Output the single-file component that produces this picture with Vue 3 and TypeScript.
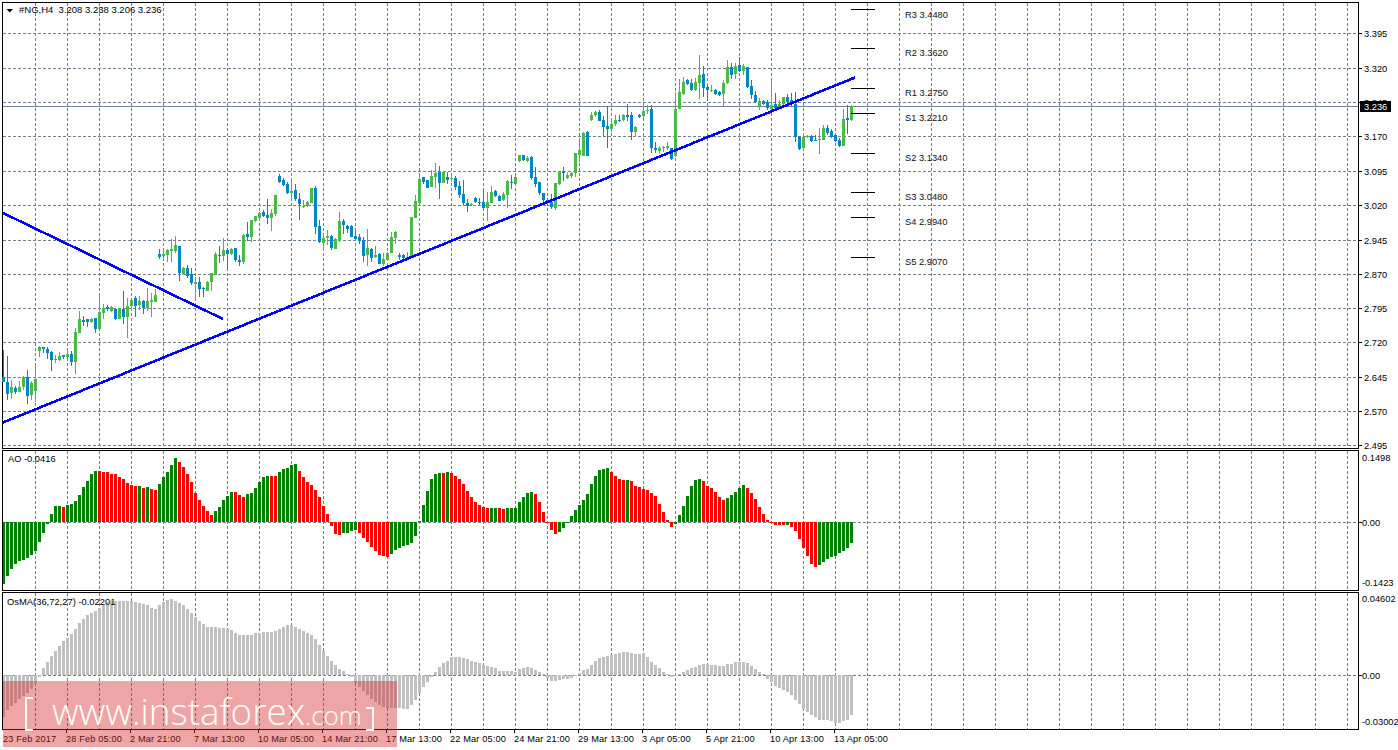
<script setup lang="ts">
type Candle = [string, number, number, number, number]

const BLUE = '#0685c5'
const GREEN = '#4cb848'

// wick top, body top, body bottom, wick bottom; measured as 3x values from a pane offset
const partA: Candle[] = [
  ['b',570,651,666,666],['b',588,665,702,720],['g',660,681,699,717],['b',678,684,696,702],['g',663,681,696,696],
  ['g',648,651,681,690],['b',630,651,708,732],['g',663,669,705,720],['g',618,657,693,726],['g',558,561,573,591],
  ['b',561,561,567,579],['b',561,567,579,597],['b',573,576,600,633],['g',585,597,600,609],['g',576,588,600,603],
  ['b',585,585,591,597],['g',570,582,591,594],['b',573,582,606,618],['g',504,516,606,642],['g',453,477,519,519],
  ['b',468,480,486,498],['b',477,477,486,501],['g',474,477,486,489],['b',474,474,507,519],['g',405,456,507,507],
  ['g',432,444,459,477],['b',435,441,447,453],['g',438,441,453,456],['b',444,447,477,480],['g',444,444,477,477],
  ['b',393,447,471,492],['g',414,438,471,534],['g',414,420,438,450],['b',408,414,438,471],['g',408,423,435,450],
  ['b',420,423,444,462],['g',384,423,444,453],['g',399,420,426,471],['g',387,405,426,426],['b',267,282,291,297],
  ['g',270,282,288,297],['g',267,270,285,306],['g',237,267,273,306],['g',228,255,273,279],['b',258,258,339,363],
  ['g',321,324,342,345],['b',315,324,348,354],['b',324,342,369,375],['g',351,366,372,420],['b',351,366,387,411],
  ['b',381,384,387,411],['g',363,366,393,393],['g',339,339,366,393],['g',276,282,345,345],['b',258,285,288,309],
  ['g',234,270,288,303],['b',264,270,282,327],['g',264,267,282,285],['b',264,264,300,306],['b',285,300,306,318],
  ['g',222,225,306,312],['b',186,222,231,243],['g',180,180,231,246],['g',168,168,183,186],['g',156,159,174,177],
  ['b',150,156,168,171],['b',117,165,174,192],['g',147,159,174,213],['g',105,105,162,168],['b',42,48,66,69],
  ['b',54,60,75,78],['b',66,72,99,102],['g',54,93,99,117],['b',72,90,117,123],['b',99,117,132,180],
  ['g',120,138,141,144],['g',123,126,138,141],['g',84,84,129,129],['b',78,84,201,222],['b',180,198,246,249],
  ['g',222,234,249,273],['g',210,228,234,255],['b',225,228,264,270],['g',234,237,267,267],['g',156,183,243,246],
  ['b',177,183,195,222],['b',195,198,207,219],['b',195,198,231,231],['b',210,228,237,240],['b',222,231,243,252],
  ['b',231,240,288,306],['g',207,264,285,318],['b',264,267,294,306],['g',258,285,291,294],['b',279,282,312,312],
  ['g',279,297,312,318],['g',276,279,300,303],['g',216,231,279,279],['g',213,216,234,252],['b',279,285,291,300],
  ['b',282,285,294,297],['g',276,291,294,297],['g',171,171,291,294],['g',105,123,174,174],['g',48,57,129,129],
  ['b',51,51,66,72],['b',60,60,84,84],
]

const partB: Candle[] = [
  ['g',360,378,411,411],['g',339,369,381,414],['b',348,366,399,447],['g',363,366,399,399],['b',366,381,390,402],
  ['g',378,384,387,396],['b',378,384,411,420],['b',393,408,435,444],['b',390,432,459,465],['b',447,459,468,486],
  ['g',459,462,465,468],['b',441,444,456,459],['b',444,456,459,468],['b',420,456,474,480],['g',426,456,474,513],
  ['g',408,426,459,459],['b',420,423,438,441],['b',435,438,453,453],['g',426,432,450,453],['g',390,393,435,474],
  ['b',375,396,399,417],['g',375,381,402,405],['g',315,315,333,336],['b',315,315,330,333],['g',318,324,333,336],
  ['b',318,321,384,390],['b',351,381,402,411],['b',396,396,429,435],['b',429,429,450,459],['b',450,450,456,468],
  ['b',432,456,471,477],['g',399,399,474,480],['g',363,366,402,405],['b',351,363,369,393],['g',366,375,384,387],
  ['g',366,369,378,384],['g',309,309,369,381],['g',270,300,315,336],['g',246,249,318,318],['b',243,246,318,318],
  ['g',186,195,210,213],['g',183,186,195,201],['b',180,186,213,213],['b',198,210,231,261],['b',168,228,237,294],
  ['g',213,222,237,246],['g',195,210,222,228],['b',195,210,213,216],['g',192,195,210,213],['b',162,195,201,213],
  ['b',186,195,246,270],['g',228,231,246,258],['b',192,195,201,204],['g',168,183,198,204],['g',165,180,183,192],
  ['b',165,177,294,309],['b',276,294,300,309],['g',288,294,303,312],['g',288,291,294,306],['g',276,288,294,300],
  ['b',294,294,327,330],['g',126,177,318,321],['g',87,126,177,177],['g',81,96,132,135],['b',87,90,102,105],
  ['b',87,99,120,123],['g',84,96,120,123],['g',15,75,99,147],['b',48,72,114,141],['b',108,111,120,153],
  ['g',105,120,123,126],['b',117,120,132,135],['b',123,126,135,138],['g',90,99,132,168],['g',30,51,99,102],
  ['b',39,51,75,87],['g',39,48,72,87],['b',21,45,63,66],['g',42,48,63,75],['b',51,51,111,114],
  ['b',90,108,135,147],['b',123,135,156,159],['g',144,153,168,180],['b',150,153,162,165],['b',150,156,174,180],
  ['g',90,165,177,180],['b',129,162,174,180],['g',150,162,171,174],['g',141,141,162,165],['b',132,141,156,162],
  ['b',129,150,159,171],['b',126,162,261,276],['b',258,261,297,300],['g',252,261,294,300],['g',255,258,261,264],
  ['b',255,258,273,276],['b',255,270,273,273],['g',234,267,270,312],['g',225,234,270,270],['b',225,234,249,255],
  ['b',237,243,261,264],['b',252,255,273,276],['b',264,270,288,291],['g',177,207,288,288],['b',165,204,210,252],
  ['g',165,168,210,213],
]

function toCandles(rows: Candle[], base: number, first: number) {
  return rows.map((r, n) => {
    const x = 3 + 4 * (first + n)
    const [wt, bt, bb, wb] = r.slice(1).map((v) => base + Math.round(Number(v) / 3)) as number[]
    return {
      wick: { x, y: wt, h: Math.max(wb - wt, 1) },
      body: { x: x - 1, y: bt, h: Math.max(bb - bt, 1) },
      fill: r[0] === 'g' ? GREEN : BLUE,
    }
  })
}
const candles = [...toCandles(partA, 160, 0), ...toCandles(partB, 50, partA.length)]

const aoHead = [-62,-54,-47,-42,-39,-38,-36,-33,-29,-20,-11,-2,8,16,16,15,17,18,21,27,35,41,48,51,51,50,50,48,48,45,43,39,37,36,36,34,35,33,32,38,45,50,57,64,60,55,48,40,29,22,16,11,7,11,15,22,26,30,30,27,25,28,29,34,40,45,46,46,46,50,53,54]
const aoTail = [30,27,48,66,81,90,105,126,153,177,213,237,240,234,234,228,225,234,249,261,276,288,300,303,306,297,285,279,273,270,264,243,198,150,108,72,57,54,54,51,54,63,72,87,108,126,141,150,156,159,159,159,159,162,159,159,159,141,126,114,111,117,141,171,204,225,237,231,219,204,183,165,150,135,117,87,63,45,42,39,51,63,72,75,75,78,93,96,102,105,114,123,147,171,195,216,207,180,153,123,93,75,72,78,93,99,111,126,135,129,120,111,99,90,99,114,132,156,177,195,204,210,210,210,210,216,228,252,279,303,327,336,330,321,312,306,303,294,288,279,264]
const aoValues = [...aoHead, ...aoTail.map((z) => Math.round((202 - z) / 3))]
const aoRuns = [15,1,8,10,1,1,1,2,5,9,5,3,6,2,5,11,4,8,13,1,1,10,2,2,7,6,13,4,1,11,7,6,5,10,1,7,9]
const aoColors: string[] = []
aoRuns.forEach((count, n) => {
  for (let k = 0; k < count; k++) aoColors.push(n % 2 === 0 ? '#008000' : '#ff0000')
})

const osmaValues = [-42,-35,-31,-28,-24,-21,-18,-14,-9,-2,7,13,19,24,29,34,37,41,46,52,56,60,62,64,67,71,73,74,74,74,74,74,74,73,72,71,70,67,66,70,73,75,76,74,72,70,66,62,58,54,51,48,48,48,47,47,46,45,42,40,40,40,40,42,42,43,43,43,44,46,48,50,50,48,46,44,42,40,36,30,24,19,14,10,6,4,1,-2,-8,-12,-16,-20,-24,-27,-30,-32,-33,-33,-33,-33,-34,-34,-30,-25,-18,-12,-7,-2,3,8,12,14,18,18,18,17,16,14,13,12,10,9,8,7,4,4,4,4,3,6,7,8,7,5,3,1,-3,-6,-6,-5,-4,-4,-3,-1,2,5,6,10,14,17,18,19,20,21,22,23,23,22,21,21,22,18,13,10,7,3,1,-2,0,1,3,5,7,8,10,11,11,10,10,9,9,11,11,13,13,13,12,9,6,3,1,-4,-7,-11,-13,-15,-17,-20,-25,-29,-34,-37,-40,-42,-45,-45,-45,-46,-48,-48,-46,-45,-40]

function bars(values: number[], zero: number) {
  return values.map((v, n) => ({
    x: 2 + 4 * n,
    y: v > 0 ? zero - v : zero,
    h: Math.max(Math.abs(v), 1),
  }))
}
const aoBars = bars(aoValues, 522)
const osmaBars = bars(osmaValues, 675)

const verticals = Array.from({ length: 42 }, (_, n) => 35 + 32 * n)

const priceRows: [number, string][] = [
  [33,'3.395'],[68,'3.320'],[102,'3.245'],[136,'3.170'],[171,'3.095'],[205,'3.020'],[240,'2.945'],
  [274,'2.870'],[308,'2.795'],[342,'2.720'],[377,'2.645'],[411,'2.570'],[445,'2.495'],
]

const pivots: { line: number; label: string; text: number }[] = [
  { line: 9, label: 'R3 3.4480', text: 15 },
  { line: 48, label: 'R2 3.3620', text: 53 },
  { line: 88, label: 'R1 3.2750', text: 93 },
  { line: 113, label: 'S1 3.2210', text: 118 },
  { line: 153, label: 'S2 3.1340', text: 158 },
  { line: 192, label: 'S3 3.0480', text: 197 },
  { line: 217, label: 'S4 2.9940', text: 222 },
  { line: 257, label: 'S5 2.9070', text: 262 },
]

const times = ['23 Feb 2017','28 Feb 05:00','2 Mar 21:00','7 Mar 13:00','10 Mar 05:00','14 Mar 21:00','17 Mar 13:00','22 Mar 05:00','24 Mar 21:00','29 Mar 13:00','3 Apr 05:00','5 Apr 21:00','10 Apr 13:00','13 Apr 05:00']
</script>

<template>
  <div class="terminal">
    <div class="pane pane-main">
      <svg class="chart" width="1398" height="449" viewBox="0 0 1398 449">
        <g class="grid">
          <line v-for="x in verticals" :key="x" :x1="x + 0.5" :x2="x + 0.5" y1="3" y2="448" />
          <line v-for="row in priceRows" :key="row[1]" x1="3" x2="1358" :y1="row[0] + 0.5" :y2="row[0] + 0.5" />
        </g>
        <rect class="frame" x="2.5" y="2.5" width="1356" height="446" />
        <rect x="3" y="106" width="1355" height="1" fill="#708090" />
        <g class="pixel">
          <template v-for="(c, n) in candles" :key="n">
            <rect :x="c.wick.x" :y="c.wick.y" width="1" :height="c.wick.h" :fill="c.fill" />
            <rect :x="c.body.x" :y="c.body.y" width="3" :height="c.body.h" :fill="c.fill" />
          </template>
        </g>
        <g class="pixel">
          <rect v-for="p in pivots" :key="p.line" x="851" :y="p.line" width="24" height="1" fill="#000" />
        </g>
        <g class="trend">
          <line x1="3" y1="422.5" x2="855" y2="77.5" />
          <line x1="3" y1="213" x2="223" y2="319" />
        </g>
        <polygon points="6.5,9 13,9 9.75,12.5" fill="#000" />
        <text class="t title" x="19" y="13">#NG,H4&#160;&#160;3.208 3.238 3.206 3.236</text>
        <text v-for="p in pivots" :key="p.label" class="t pivot" x="905" :y="p.text + 3">{{ p.label }}</text>
        <g class="pixel">
          <rect v-for="row in priceRows" :key="row[1]" x="1359" :y="row[0]" width="3" height="1" fill="#000" />
        </g>
        <text v-for="row in priceRows" :key="row[1]" class="t" x="1364" :y="row[0] + 3.5">{{ row[1] }}</text>
        <rect x="1360" y="101" width="31" height="11" fill="#000" />
        <text class="t bid" x="1364" y="110">3.236</text>
      </svg>
    </div>

    <div class="pane pane-ao">
      <svg class="chart" width="1398" height="141" viewBox="0 450 1398 141">
        <g class="grid">
          <line v-for="x in verticals" :key="x" :x1="x + 0.5" :x2="x + 0.5" y1="451" y2="590" />
          <line x1="3" x2="1358" y1="522.5" y2="522.5" />
        </g>
        <g class="pixel">
          <rect v-for="(b, n) in aoBars" :key="n" :x="b.x" :y="b.y" width="3" :height="b.h" :fill="aoColors[n]" />
        </g>
        <rect class="frame" x="2.5" y="450.5" width="1356" height="140" />
        <text class="t" x="8" y="462">AO -0.0416</text>
        <text class="t" x="1362" y="461">0.1498</text>
        <rect class="pixel" x="1359" y="522" width="3" height="1" fill="#000" />
        <text class="t" x="1362" y="526">0.00</text>
        <text class="t" x="1362" y="586">-0.1423</text>
      </svg>
    </div>

    <div class="pane pane-osma">
      <svg class="chart" width="1398" height="138" viewBox="0 592 1398 138">
        <g class="grid">
          <line v-for="x in verticals" :key="x" :x1="x + 0.5" :x2="x + 0.5" y1="593" y2="729" />
          <line x1="3" x2="1358" y1="675.5" y2="675.5" />
        </g>
        <g class="pixel">
          <rect v-for="(b, n) in osmaBars" :key="n" :x="b.x" :y="b.y" width="3" :height="b.h" fill="#c0c0c0" />
        </g>
        <rect class="frame" x="2.5" y="592.5" width="1356" height="137" />
        <text class="t osma" x="7" y="605">OsMA(36,72,27) -0.02201</text>
        <text class="t" x="1362" y="602">0.04602</text>
        <rect class="pixel" x="1359" y="675" width="3" height="1" fill="#000" />
        <text class="t" x="1362" y="678.500">0.00</text>
        <text class="t" x="1362" y="725">-0.03002</text>
      </svg>
    </div>

    <div class="time-axis">
      <div v-for="(label, n) in times" :key="label" class="time-cell" :class="{ first: n === 0 }">{{ label }}</div>
    </div>

    <div class="watermark">
      <span class="bracket left"></span>
      <span class="brand">www.instaforex<small>.com</small></span>
      <span class="bracket right"></span>
    </div>
  </div>
</template>

<style scoped>
.terminal {
  position: relative;
  width: 1398px;
  height: 750px;
  overflow: hidden;
  background: #fff;
  font-family: "Liberation Sans", Arial, sans-serif;
}
.pane {
  height: 449px;
}
.pane-main {
  margin-bottom: 1px;
}
.pane-ao {
  height: 141px;
  margin-bottom: 1px;
}
.pane-osma {
  height: 138px;
}
.chart {
  display: block;
}
.grid line {
  stroke: #708090;
  stroke-width: 1;
  stroke-dasharray: 3 2;
  shape-rendering: crispEdges;
}
.frame {
  fill: none;
  stroke: #000;
  stroke-width: 1;
  shape-rendering: crispEdges;
}
.pixel {
  shape-rendering: crispEdges;
}
.trend line {
  stroke: #0000ff;
  stroke-width: 2.6;
  shape-rendering: crispEdges;
}
.t {
  font-family: "Liberation Sans", Arial, sans-serif;
  font-size: 9.3px;
  fill: #000;
}
.title {
  font-size: 9.5px;
}
.osma {
  font-size: 9.4px;
}
.pivot {
  fill: #111;
}
.bid {
  fill: #fff;
}
.time-axis {
  display: flex;
  height: 20px;
  padding-left: 3px;
}
.time-cell {
  position: relative;
  width: 64px;
  flex: none;
  padding-top: 4px;
  font-size: 9.2px;
  line-height: 11px;
  letter-spacing: 0.15px;
  color: #000;
  white-space: nowrap;
}
.time-cell::before {
  content: "";
  position: absolute;
  left: 0;
  top: 0;
  width: 1px;
  height: 3px;
  background: #000;
}
.time-cell.first {
  width: 63px;
}
.time-cell.first::before {
  display: none;
}
.watermark {
  position: absolute;
  left: 3px;
  top: 681px;
  width: 394px;
  height: 66px;
  background: rgba(215, 40, 40, 0.42);
  color: #fff;
}
.brand {
  position: absolute;
  left: 49px;
  top: 5px;
  font-family: "Open Sans", "Liberation Sans", sans-serif;
  font-weight: 300;
  font-size: 36.8px;
  line-height: 50px;
  white-space: nowrap;
}
.brand small {
  font-size: 26px;
}
.bracket {
  position: absolute;
  width: 6px;
  border: 2px solid #fff;
}
.bracket.left {
  left: 22px;
  top: 16px;
  height: 30px;
  border-right: none;
}
.bracket.right {
  left: 363px;
  top: 26px;
  height: 20px;
  border-left: none;
}
</style>
